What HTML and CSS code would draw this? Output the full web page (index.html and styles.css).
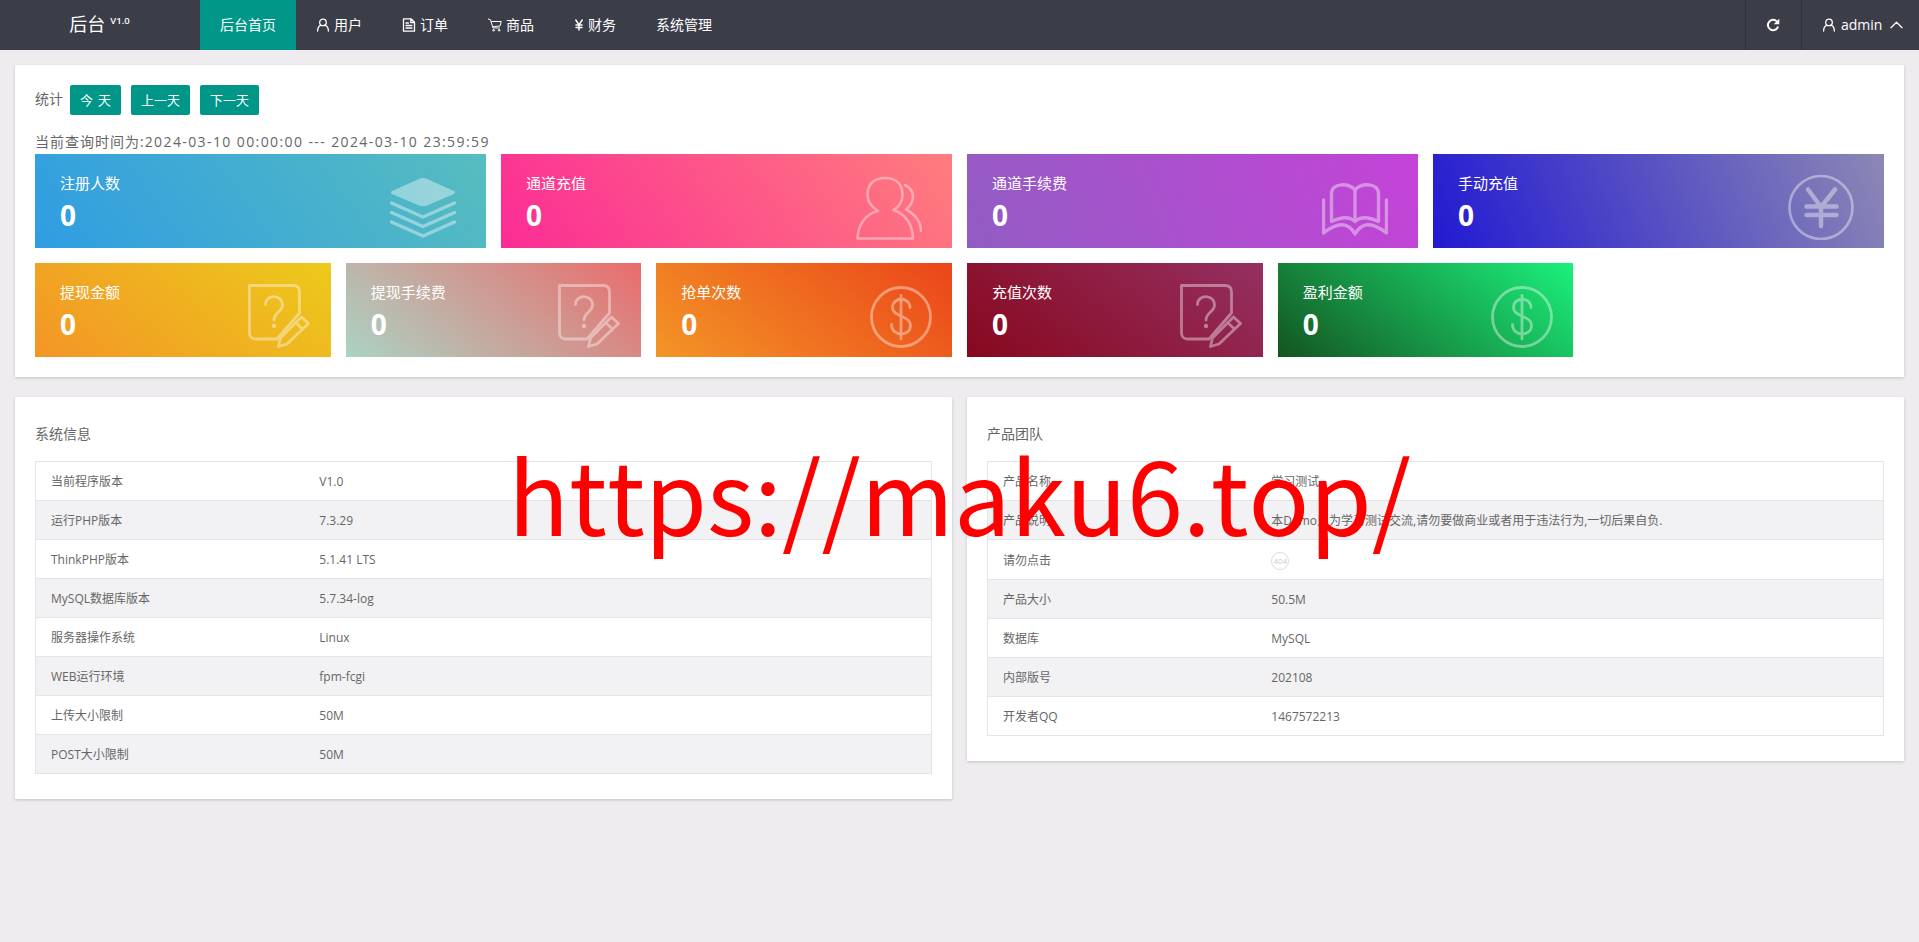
FILE: index.html
```html
<!DOCTYPE html>
<html lang="zh-CN">
<head>
    <meta charset="UTF-8">
    <meta name="viewport" content="width=device-width, initial-scale=1.0">
    <title>后台首页</title>
    <link rel="stylesheet" href="styles.css">
</head>
<body>
    <!-- shared icons -->
    <svg class="sprite">
        <symbol id="icon-user" viewBox="0 0 14 14">
            <circle cx="7" cy="4.4" r="3.3"/>
            <path d="M5 7.2C2.8 8 1.7 10 1.6 13M9 7.2c2.2.8 3.3 2.800 3.400 5.800"/>
        </symbol>
        <symbol id="icon-note" viewBox="0 0 62 64">
            <path d="M1.500 1.500H45Q51.500 1.500 51.500 8V29L29 55H8Q1.500 55 1.500 48.500Z"/>
            <path d="M17.500 20.500C17.500 10 34.500 10 34.500 21C34.500 28 26 28 26 36"/>
            <path class="dot" d="M26 42v.1"/>
            <path d="M53.500 33L60.500 39.500L39 60L30.500 62.500L32.500 54ZM47.500 38.500L54.500 45"/>
        </symbol>
        <symbol id="icon-dollar" viewBox="0 0 62 62">
            <circle cx="31" cy="31" r="29.500"/>
            <path d="M31 9.500V53M40 21.500C40 10.500 22.500 10.500 22.500 21.500C22.500 31 40.500 29.500 40.500 39.500C40.500 51 21.500 51 21.500 38.500"/>
        </symbol>
    </svg>

    <div class="header">
        <div class="logo">后台<sup>V1.0</sup></div>
        <ul class="nav">
            <li class="active">后台首页</li>
            <li><svg class="icon"><use href="#icon-user"/></svg>用户</li>
            <li>
                <svg class="icon" viewBox="0 0 14 14"><path d="M1.500.8H9L12.500 4.300V13.200H1.500ZM8.800.8V4.500H12.500M4 5H6.500M4 7.500H10M4 10H10"/></svg>订单
            </li>
            <li>
                <svg class="icon cart" viewBox="0 0 14 14"><path d="M.3 1L2.500 1.800L5 10H11.500M3.500 3.500H13.300L12 8L5 8.800"/><circle cx="5.500" cy="12.300" r=".8"/><circle cx="11" cy="12.300" r=".8"/></svg>商品
            </li>
            <li>
                <svg class="icon yen" viewBox="0 0 10 14"><path d="M1.800 2L5 6.800L8.200 2M5 6.500V12M2 7H8M2 9.500H8"/></svg>财务
            </li>
            <li>系统管理</li>
        </ul>
        <div class="tools">
            <div class="refresh">
                <svg class="icon" viewBox="0 0 14 14"><path d="M11.800 9.300A5.200 5.200 0 1 1 10.800 3.400"/><path class="solid" d="M13.300.7V6.300H7.700Z"/></svg>
            </div>
            <div class="account">
                <svg class="icon"><use href="#icon-user"/></svg>admin<svg class="arrow" viewBox="0 0 14 8"><path d="M1 7L7 1L13 7"/></svg>
            </div>
        </div>
    </div>

    <div class="container">
        <div class="card stats">
            <div class="filter">
                <span class="filter-title">统计</span>
                <button class="btn">今 天</button>
                <button class="btn">上一天</button>
                <button class="btn">下一天</button>
            </div>
            <div class="range">当前查询时间为:<span class="time">2024-03-10 00:00:00 --- 2024-03-10 23:59:59</span></div>

            <div class="tiles tiles-large">
                <div class="tile blue">
                    <p>注册人数</p><b>0</b>
                    <svg class="tile-icon" viewBox="0 0 66 66">
                        <path class="solid" d="M33 4Q35 4 37 5L64 17Q66 18.500 64 20L37 31.500Q33 33 29 31.500L2 20Q0 18.500 2 17L29 5Q31 4 33 4Z"/>
                        <path class="thick" d="M1.500 29L33 43L64.500 29M1.500 38.500L33 52.500L64.500 38.500M1.500 48L33 62L64.500 48"/>
                    </svg>
                </div>
                <div class="tile pink">
                    <p>通道充值</p><b>0</b>
                    <svg class="tile-icon" viewBox="0 0 66 66">
                        <path d="M22 37C14 32 11.500 26 11.500 21C11.500 10 18 4 29 4S46.500 10 46.500 21C46.500 26 44 32 37.500 36C49 40 56.500 50 57 64.500H1.500C2 50 10 40 22 37"/>
                        <path d="M49 11C59 16 60 27 50 35.500C59 40 65 48 65 57"/>
                    </svg>
                </div>
                <div class="tile purple">
                    <p>通道手续费</p><b>0</b>
                    <svg class="tile-icon" viewBox="0 0 66 66">
                        <path class="thick" d="M33 16C27 9 9.500 8 9.500 20V47.500Q25 40 33 47.500Q41 40 56.500 47.500V20C56.500 8 39 9 33 16ZM33 16V47"/>
                        <path class="thick" d="M1.500 26V59Q23 42 33 60Q43 42 64.500 59V26"/>
                    </svg>
                </div>
                <div class="tile indigo">
                    <p>手动充值</p><b>0</b>
                    <svg class="tile-icon" viewBox="0 0 66 66">
                        <circle cx="33" cy="33.500" r="31.500"/>
                        <path class="bold" d="M20 15.500L33 33L47 15.500M33 33V52M18.500 32.500H48.500M18.500 41H48.500"/>
                    </svg>
                </div>
            </div>
            <div class="tiles tiles-small">
                <div class="tile yellow"><p>提现金额</p><b>0</b><svg class="tile-icon note"><use href="#icon-note"/></svg></div>
                <div class="tile coral"><p>提现手续费</p><b>0</b><svg class="tile-icon note"><use href="#icon-note"/></svg></div>
                <div class="tile orange"><p>抢单次数</p><b>0</b><svg class="tile-icon"><use href="#icon-dollar"/></svg></div>
                <div class="tile wine"><p>充值次数</p><b>0</b><svg class="tile-icon note"><use href="#icon-note"/></svg></div>
                <div class="tile green"><p>盈利金额</p><b>0</b><svg class="tile-icon"><use href="#icon-dollar"/></svg></div>
            </div>
        </div>

        <div class="panels">
            <div class="card panel">
                <h3>系统信息</h3>
                <table>
                    <tr><td>当前程序版本</td><td>V1.0</td></tr>
                    <tr><td>运行PHP版本</td><td>7.3.29</td></tr>
                    <tr><td>ThinkPHP版本</td><td>5.1.41 LTS</td></tr>
                    <tr><td>MySQL数据库版本</td><td>5.7.34-log</td></tr>
                    <tr><td>服务器操作系统</td><td>Linux</td></tr>
                    <tr><td>WEB运行环境</td><td>fpm-fcgi</td></tr>
                    <tr><td>上传大小限制</td><td>50M</td></tr>
                    <tr><td>POST大小限制</td><td>50M</td></tr>
                </table>
            </div>
            <div class="card panel">
                <h3>产品团队</h3>
                <table>
                    <tr><td>产品名称</td><td>学习测试</td></tr>
                    <tr><td>产品说明</td><td>本Demo只为学习测试交流,请勿要做商业或者用于违法行为,一切后果自负.</td></tr>
                    <tr class="tall"><td>请勿点击</td><td><span class="badge">404</span></td></tr>
                    <tr><td>产品大小</td><td>50.5M</td></tr>
                    <tr><td>数据库</td><td>MySQL</td></tr>
                    <tr><td>内部版号</td><td>202108</td></tr>
                    <tr><td>开发者QQ</td><td>1467572213</td></tr>
                </table>
            </div>
        </div>
    </div>

    <div class="watermark">https://maku6.top/</div>
</body>
</html>
```

FILE: styles.css
```css
* {
    box-sizing: border-box;
}

body {
    margin: 0;
    min-height: 942px;
    font-family: "Open Sans", "Noto Sans CJK SC", sans-serif;
    font-size: 14px;
    line-height: 24px;
    color: #666;
    background-color: #eeecee;
    overflow: hidden;
}

svg {
    fill: none;
    stroke: currentColor;
    stroke-linecap: round;
    stroke-linejoin: round;
}

.solid {
    fill: currentColor;
    stroke: none;
}

.sprite {
    display: none;
}

/* header */
.header {
    display: flex;
    height: 50px;
    background-color: #3b3d49;
    color: #fff;
}

.logo {
    width: 200px;
    padding-right: 1px;
    text-align: center;
    font-size: 18px;
    line-height: 48px;
}

.logo sup {
    margin-left: 5px;
    font-size: 9.5px;
    font-weight: 600;
    line-height: 0;
}

.nav {
    display: flex;
    margin: 0;
    padding: 0;
    list-style: none;
}

.nav li {
    display: flex;
    align-items: center;
    padding: 0 20px;
}

.nav .active {
    background-color: #009688;
}

.icon {
    width: 14px;
    height: 14px;
    margin-right: 4px;
    stroke-width: 1.3;
}

.icon.cart {
    stroke-width: 1;
}

.icon.yen {
    width: 10px;
    stroke-width: 1.5;
}

.tools {
    display: flex;
    margin-left: auto;
}

.tools > div {
    display: flex;
    align-items: center;
    border-left: 1px solid #30323d;
}

.refresh {
    width: 56px;
    padding-left: 20px;
}

.refresh .icon {
    stroke-width: 2;
}

.account {
    width: 118px;
    padding-left: 20px;
}

.account .icon {
    margin-right: 5px;
}

.arrow {
    width: 13px;
    height: 8px;
    margin-left: 8px;
    stroke-width: 1.3;
}

/* cards */
.container {
    padding: 15px;
}

.card {
    background-color: #fff;
    box-shadow: 0 1px 3px rgba(0, 0, 0, 0.18);
}

.stats {
    height: 312px;
    padding: 20px;
}

.filter {
    display: flex;
    height: 30px;
    margin-bottom: 15px;
}

.filter-title {
    width: 35px;
    line-height: 28px;
}

.btn {
    height: 30px;
    margin-right: 10px;
    padding: 0 10px 1px;
    border: none;
    border-radius: 2px;
    background-color: #009688;
    color: #fff;
    font-family: inherit;
    font-size: 13px;
    word-spacing: 1.7px;
}

.range {
    height: 24px;
    letter-spacing: 1px;
}

.time {
    letter-spacing: 1.4px;
}

.tiles {
    display: grid;
    gap: 15px;
}

.tiles-large {
    grid-template-columns: repeat(4, 1fr);
    margin-bottom: 15px;
}

.tiles-small {
    grid-template-columns: repeat(6, 1fr);
}

.tile {
    position: relative;
    height: 94px;
    padding: 17px 25px;
    color: #fff;
}

.tile p {
    margin: 0;
    font-size: 15px;
}

.tile b {
    display: block;
    font-size: 28px;
    line-height: 41px;
}

.tile-icon {
    position: absolute;
    top: 20px;
    right: 30px;
    width: 66px;
    height: 66px;
    opacity: 0.4;
    stroke-width: 2.6;
}

.tiles-small .tile-icon {
    top: 23px;
    right: 20px;
    width: 62px;
    height: 62px;
    stroke-width: 2.8;
}

.tiles-small .note {
    top: 21px;
    right: 21px;
    height: 64px;
}

.thick {
    stroke-width: 3.4;
}

.bold,
.dot {
    stroke-width: 4.5;
}

.blue { background: linear-gradient(-125deg, #57bdbf, #2f9de2); }
.pink { background: linear-gradient(-125deg, #ff7d7d, #fb2c95); }
.purple { background: linear-gradient(-113deg, #c543d8, #925cc3); }
.indigo { background: linear-gradient(-113deg, #8c88b4, #2219d2); }
.yellow { background: linear-gradient(-141deg, #ecca1b, #f39526); }
.coral { background: linear-gradient(-141deg, #ea6c6c, #abd3c3); }
.orange { background: linear-gradient(-141deg, #eb451a, #f39526); }
.wine { background: linear-gradient(-141deg, #953062, #87081e); }
.green { background: linear-gradient(-141deg, #1bf17c, #145420); }

/* info tables */
.panels {
    display: flex;
    align-items: flex-start;
    gap: 15px;
    margin-top: 20px;
}

.panel {
    flex: 1;
    padding: 25px 20px;
}

.panel h3 {
    margin: 0 0 15px;
    font-size: 14px;
    font-weight: 400;
}

table {
    width: 100%;
    table-layout: fixed;
    border-collapse: collapse;
    border: 1px solid #e4e3e5;
    font-size: 12px;
    line-height: 20px;
}

tr {
    height: 39px;
    border-bottom: 1px solid #e4e3e5;
}

tr:nth-child(even) {
    background-color: #f2f1f3;
}

tr.tall {
    height: 40px;
}

td {
    padding: 2px 15px 0;
}

td:first-child {
    width: 30%;
}

.badge {
    display: block;
    width: 18px;
    height: 18px;
    border: 1px solid #ddd;
    border-radius: 50%;
    color: #ccc;
    font-size: 8px;
    line-height: 16px;
    text-align: center;
}

.watermark {
    position: absolute;
    top: 412px;
    left: 508px;
    color: #f00;
    font-family: "Noto Sans CJK SC", sans-serif;
    font-size: 100.5px;
    font-kerning: none;
    line-height: 160px;
    white-space: nowrap;
}
```
